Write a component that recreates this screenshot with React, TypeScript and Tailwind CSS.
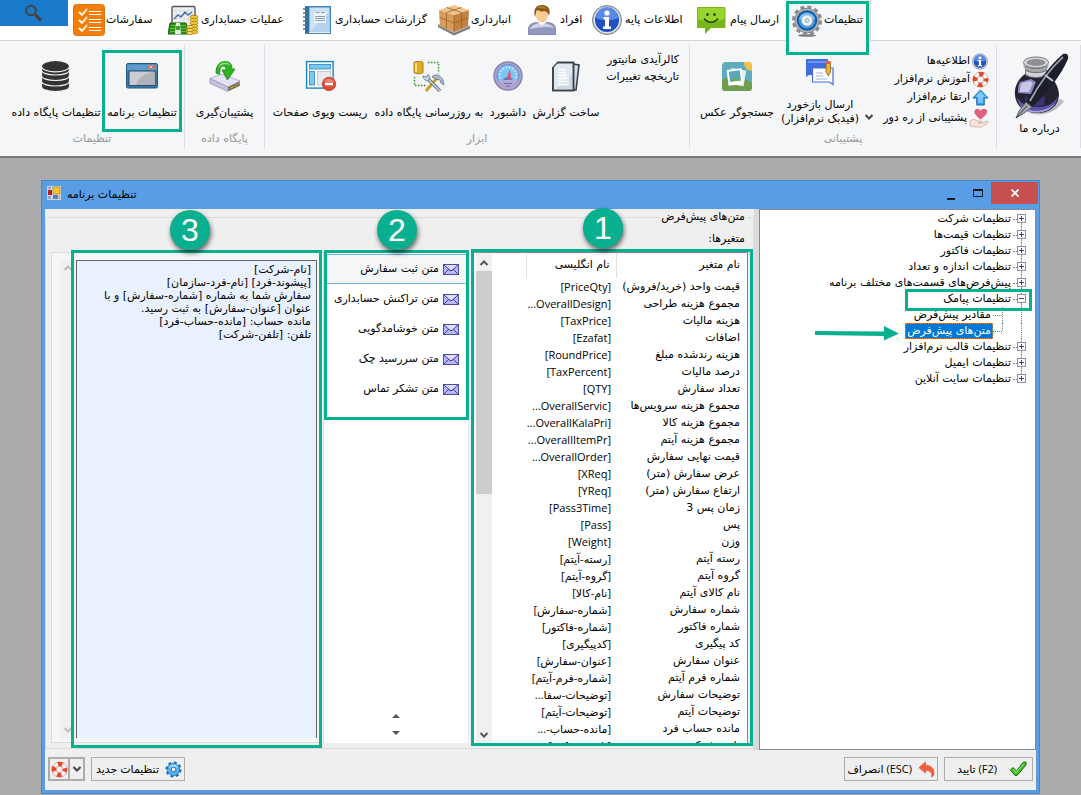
import React from 'react';
import clsx from 'clsx';

const variables: [string, string][] = [
  ['قیمت واحد (خرید/فروش)', '[PriceQty]'],
  ['مجموع هزینه طراحی', '[OverallDesign...'],
  ['هزینه مالیات', '[TaxPrice]'],
  ['اضافات', '[Ezafat]'],
  ['هزینه رندشده مبلغ', '[RoundPrice]'],
  ['درصد مالیات', '[TaxPercent]'],
  ['تعداد سفارش', '[QTY]'],
  ['مجموع هزینه سرویس‌ها', '[OverallServic...'],
  ['مجموع هزینه کالا', '[OverallKalaPri...'],
  ['مجموع هزینه آیتم', '[OverallItemPr...'],
  ['قیمت نهایی سفارش', '[OverallOrder...'],
  ['عرض سفارش (متر)', '[XReq]'],
  ['ارتفاع سفارش (متر)', '[YReq]'],
  ['زمان پس 3', '[Pass3Time]'],
  ['پس', '[Pass]'],
  ['وزن', '[Weight]'],
  ['رسته آیتم', '[رسته-آیتم]'],
  ['گروه آیتم', '[گروه-آیتم]'],
  ['نام کالای آیتم', '[نام-کالا]'],
  ['شماره سفارش', '[شماره-سفارش]'],
  ['شماره فاکتور', '[شماره-فاکتور]'],
  ['کد پیگیری', '[کدپیگیری]'],
  ['عنوان سفارش', '[عنوان-سفارش]'],
  ['شماره فرم آیتم', '[شماره-فرم-آیتم]'],
  ['توضیحات سفارش', '[توضیحات-سفا...'],
  ['توضیحات آیتم', '[توضیحات-آیتم]'],
  ['مانده حساب فرد', '[مانده-حساب-...'],
  ['تلفن شرکت', '[تلفن-شرکت]'],
];

const messages = [
  'متن ثبت سفارش',
  'متن تراکنش حسابداری',
  'متن خوشامدگویی',
  'متن سررسید چک',
  'متن تشکر تماس',
];

const template = `[نام-شرکت]
[پیشوند-فرد] [نام-فرد-سازمان]
سفارش شما به شماره [شماره-سفارش] و با
عنوان [عنوان-سفارش] به ثبت رسید.
مانده حساب: [مانده-حساب-فرد]
تلفن: [تلفن-شرکت]`;

interface TreeNode {
  label: string;
  open?: boolean;
  child?: boolean;
  selected?: boolean;
}

const tree: TreeNode[] = [
  { label: 'تنظیمات شرکت' },
  { label: 'تنظیمات قیمت‌ها' },
  { label: 'تنظیمات فاکتور' },
  { label: 'تنظیمات اندازه و تعداد' },
  { label: 'پیش‌فرض‌های قسمت‌های مختلف برنامه' },
  { label: 'تنظیمات پیامک', open: true },
  { label: 'مقادیر پیش‌فرض', child: true },
  { label: 'متن‌های پیش‌فرض', child: true, selected: true },
  { label: 'تنظیمات قالب نرم‌افزار' },
  { label: 'تنظیمات ایمیل' },
  { label: 'تنظیمات سایت آنلاین' },
];

/* ---------- icons ---------- */

const OrdersIcon = () => (
  <svg viewBox="0 0 32 32" className="size-8 shrink-0">
    <rect x="0.5" y="0.5" width="31" height="31" rx="3" fill="#f57f06" stroke="#d9730c" />
    <g fill="none" stroke="#fff" strokeWidth="1.8">
      <path d="M6 8l3 3 5-6M6 16l3 3 5-6M6 24l3 3 5-6" />
      <path d="M16 7.5h12M16 10.5h12M16 15.5h12M16 18.5h12M16 23.5h12M16 26.5h12" strokeWidth="1.1" />
    </g>
  </svg>
);

const OperationsIcon = () => (
  <svg viewBox="0 0 32 32" className="size-8 shrink-0">
    <rect x="4" y="2.500" width="23" height="22" rx="1.500" fill="#f2f2f2" stroke="#555" strokeWidth="1.400" />
    <path d="M8 3v20M12 3v20M16 3v20M20 3v20M24 3v20M5 7h21M5 11h21M5 15h21" stroke="#d3d7dc" strokeWidth=".7" />
    <path d="M6 15l4-4 3 2 4-5 3 3 4-3" fill="none" stroke="#4571ad" strokeWidth="1.500" />
    <path d="M2 19h16l2 11H0z" fill="#2f8f1c" stroke="#1b5f10" />
    <path d="M3 21.500h15M2 24.500h17M2 27.500h18" stroke="#5cba40" />
    <path d="M8 19h4l1 11H7z" fill="#e9f3e4" />
    <circle cx="10" cy="24" r="2.300" fill="#3d9b2a" />
    {[13, 16, 19, 22, 25, 28].map((y) => (
      <ellipse key={y} cx="26" cy={y} rx="4" ry="1.800" fill="#f1c93b" stroke="#a87b12" strokeWidth=".8" />
    ))}
    {[23, 26, 29].map((y) => (
      <ellipse key={y} cx="22" cy={y} rx="3.500" ry="1.600" fill="#f7d85a" stroke="#a87b12" strokeWidth=".8" />
    ))}
  </svg>
);

const ReportsIcon = () => (
  <svg viewBox="0 0 32 32" className="size-8 shrink-0">
    <rect x="3" y="2" width="26" height="28" fill="#4387b7" />
    <rect x="3" y="3" width="4" height="26" fill="#2f6f9f" />
    <rect x="7.500" y="3.500" width="20" height="24.500" fill="#cde2f4" />
    <path d="M7.500 28L27.500 8v20z" fill="#b5d3ec" />
    <path d="M12 8h12v11H12z" fill="#eef4fa" />
    <path d="M13.500 8.500h4m1.500 0h4M13 12.500h10M13 14.500h10M13 16.500h10" stroke="#7c97b8" strokeWidth=".9" />
    <path d="M1 5h5M1 9h5M1 13h5M1 17h5M1 21h5M1 25h5" stroke="#6a7684" strokeWidth="1.600" strokeDasharray="3 1" />
    <path d="M7 28.500h21" stroke="#e8eef4" />
  </svg>
);

const BoxIcon = () => (
  <svg viewBox="0 0 32 32" className="size-8 shrink-0">
    <path d="M0 23l16 8.500 16-7v-3L16 28 0 20z" fill="#7c7c7c" />
    <path d="M0 21l16 8 16-7-5-4-21-1z" fill="#c6c6c6" />
    <path d="M1 6l15 5v17L2 22z" fill="#d99b58" />
    <path d="M16 11l15-5-1 16-14 6z" fill="#c4803f" />
    <path d="M1 6l15-5 15 5-15 5z" fill="#f0c48c" />
    <path d="M8.500 3.500l15 5M23.500 3.500l-15 5v16M23.500 8.500v16M1.500 13.500L16 19l14.500-5.500M16 11v17" fill="none" stroke="#9a6233" strokeWidth=".8" />
  </svg>
);

const PersonIcon = () => (
  <svg viewBox="0 0 32 32" className="size-8 shrink-0">
    <path d="M1.500 30.500v-5c0-5 4-6.500 8-7h11c5 .5 8 2 8 7v5z" fill="#9298bf" stroke="#6e769f" strokeWidth=".8" />
    <path d="M3 25c2-5 8-6 12-6s10 2 12 5c-6-2-16-1-24 1z" fill="#cfd3ea" />
    <path d="M10 17.500l5 4 5-4v-3H10z" fill="#fff" />
    <ellipse cx="15" cy="11" rx="6" ry="7.500" fill="#fbcb97" />
    <path d="M8 13C6 5 9 1 15 1c7 0 9 5 7 11-1-3-2-4-4-5-3 1-6 0-8-1-1 2-1 4-2 7z" fill="#8a5a1c" />
    <path d="M10 4c3-3 8-2 10 1-3-1-6-1-10-1z" fill="#b57c30" />
  </svg>
);

const InfoIcon = ({ className }: { className: string }) => (
  <svg viewBox="0 0 32 32" className={className}>
    <circle cx="15" cy="16" r="14.500" fill="#a9adb6" stroke="#7f848e" />
    <circle cx="15" cy="16" r="13.500" fill="#dfe2ea" />
    <circle cx="15" cy="16" r="12" fill="#2152c4" />
    <path d="M4 14a11 11 0 0 1 22 0c-6 3-15 3-22 0z" fill="#5b8ae6" />
    <circle cx="15" cy="9" r="2.600" fill="#fff" />
    <path d="M11.500 13h5.500v9.500h2v2.500h-8v-2.500h2v-7h-1.500z" fill="#fff" />
  </svg>
);

const ChatIcon = () => (
  <svg viewBox="0 0 32 32" className="size-8 shrink-0">
    <path d="M1 3h26c1 0 1.500.5 1.500 1.500v18c0 1-.5 1.500-1.500 1.500H14l-6 6v-6H1c-.5 0-1-.5-1-1V4c0-.5.5-1 1-1z" fill="#79b51c" />
    <path d="M1 4h26.500v11C18 18 8 18 1 15z" fill="#9ad42f" />
    <ellipse cx="10.500" cy="10.500" rx="1.300" ry="1.600" fill="#234a07" />
    <ellipse cx="17.500" cy="10.500" rx="1.300" ry="1.600" fill="#234a07" />
    <path d="M7 14.500c4 5 10 5 14 0" fill="none" stroke="#234a07" strokeWidth="1.600" />
  </svg>
);

const GearIcon = () => (
  <svg viewBox="0 0 32 32" className="size-8 shrink-0">
    <ellipse cx="16" cy="30.500" rx="9" ry="1.300" fill="#77797c" />
    <circle cx="16" cy="15.500" r="13.300" fill="none" stroke="#8b8d90" strokeWidth="3.600" strokeDasharray="4 2.960" />
    <circle cx="16" cy="15.500" r="12.300" fill="#b4b6b9" stroke="#77797c" strokeWidth=".8" />
    <circle cx="16" cy="15.500" r="10.300" fill="#14599f" />
    <circle cx="16" cy="15.500" r="8.300" fill="#3f9be4" />
    <path d="M8 14a8.300 8.300 0 0 1 16 0z" fill="#7cc4f5" />
    <circle cx="16" cy="15.500" r="5.500" fill="#eef2f6" stroke="#aab3bd" strokeWidth=".7" />
    <circle cx="16" cy="15.500" r="2" fill="#d3d9e0" stroke="#8d959f" strokeWidth=".7" />
  </svg>
);

const DatabaseIcon = () => (
  <svg viewBox="0 0 32 32" className="size-8">
    <g fill="#333" stroke="#f5f6f8" strokeWidth="1.200">
      <path d="M1.500 21.500v5c0 3 6 5 14 5s14-2 14-5v-5z" />
      <path d="M1.500 16v5c0 3 6 5 14 5s14-2 14-5v-5z" />
      <path d="M1.500 10.500v5c0 3 6 5 14 5s14-2 14-5v-5z" />
      <path d="M1.500 6v4c0 3 6 5 14 5s14-2 14-5V6z" />
      <ellipse cx="15.500" cy="6.200" rx="14" ry="5.700" />
    </g>
  </svg>
);

const WindowIcon = () => (
  <svg viewBox="0 0 32 32" className="size-8">
    <rect x=".5" y="3.500" width="31" height="24.500" rx="1.500" fill="#3b7cae" stroke="#20567f" />
    <path d="M1 4.500h30v6H1z" fill="#5c9ccb" />
    <rect x="3" y="11" width="26" height="14.500" fill="#c9cbd0" stroke="#2d4a66" />
    <path d="M10 25c2-7 8-12 19-13v13z" fill="#b0b3b9" />
    <path d="M21 5h8v4h-8z" fill="#c4726f" />
    <path d="M23.500 5.500l3 3m0-3l-3 3" stroke="#f3dede" strokeWidth=".9" />
  </svg>
);

const BackupIcon = () => (
  <svg viewBox="0 0 32 32" className="size-8">
    <path d="M1 18.500L12 14l19 7-12 6z" fill="#e4e2f4" stroke="#a9a7c6" strokeWidth=".8" />
    <path d="M1 18.500l18 8.500v4.500L1 23.500z" fill="#c3c1dd" stroke="#8886a8" strokeWidth=".6" />
    <path d="M19 27l12-6v5l-12 5.500z" fill="#8b8996" />
    <path d="M20 28.700l6-2.700M27.500 25.300l2-1" stroke="#5a4a10" strokeWidth="2.600" />
    <path d="M20.500 28.500l5-2.300M27.700 25.200l1.500-.7" stroke="#e6c53a" strokeWidth="1.200" />
    <path d="M7 13C7 5 11 1.500 16 1.500c5.500 0 7 3.500 7 7.500h3l-7.500 11L13 10h4c0-3-1-4-3-4-3 0-3 4-3.500 8.500z" fill="#2fb421" stroke="#1c8614" strokeWidth=".8" />
    <path d="M9 8c1-4 4-5.500 7.500-5.500 2 0 4 1 5 3-4-2-9-2-12.500 2.500z" fill="#8ae37a" />
  </svg>
);

const ResetViewIcon = () => (
  <svg viewBox="0 0 32 32" className="size-8">
    <rect x="2.600" y="1.600" width="26.500" height="26.500" fill="#fff" stroke="#1a86b8" strokeWidth="1.400" />
    <rect x="5.500" y="4.500" width="21" height="4.500" fill="#7fc7ef" stroke="#2b87bd" strokeWidth=".8" />
    <rect x="5.500" y="11.500" width="5" height="13.500" fill="#7fc7ef" stroke="#2b87bd" strokeWidth=".8" />
    <rect x="13.500" y="11.500" width="13" height="13.500" fill="#e8eaed" stroke="#b9bec6" strokeWidth=".8" />
    <circle cx="25" cy="24" r="6.700" fill="#e14a36" stroke="#b23322" strokeWidth=".7" />
    <path d="M20 22a5.500 5.500 0 0 1 10 0z" fill="#f08775" />
    <rect x="21" y="22.700" width="8" height="2.600" fill="#fff" />
  </svg>
);

const UpdateDbIcon = () => (
  <svg viewBox="0 0 32 32" className="size-8">
    <path d="M1 2.500c0-1.500 9-1.500 9 0v10c0 1.500-9 1.500-9 0z" fill="#e3ad1d" stroke="#8a6a14" strokeWidth=".8" />
    <path d="M3 3v9" stroke="#fbe58f" strokeWidth="1.800" />
    <path d="M15 2.500h10.500v11M1.500 17v8.500h11" fill="none" stroke="#2e8a2b" strokeWidth="1.400" strokeDasharray="1.500 1.500" />
    <path d="M13 31l11-13" stroke="#d29a25" strokeWidth="3" />
    <path d="M19 17c4-4 8-2 11 3l1 5-3-2-1-3-4-1z" fill="#aebdd0" stroke="#55657a" strokeWidth=".7" />
    <path d="M14 18l13 13" stroke="#56687f" strokeWidth="3.200" />
    <path d="M14 18l13 13" stroke="#c5d3e3" strokeWidth="1.700" />
    <path d="M10 16l4 1 1-2.500c2 1 2.500 4 1 5.500s-5 1-6-4z" fill="#c5d3e3" stroke="#56687f" strokeWidth=".7" />
  </svg>
);

const DashboardIcon = () => (
  <svg viewBox="0 0 32 32" className="size-8">
    <circle cx="16" cy="16" r="14" fill="#a9a5cf" stroke="#8d7db4" strokeWidth="1.400" />
    <circle cx="16" cy="15.500" r="11" fill="#7cc5f5" stroke="#7e83c0" />
    <path d="M6 20.500h20c-4 8-16 8-20 0z" fill="#b4a9d4" />
    <path d="M8 18a8.300 8.300 0 1 1 16 0" fill="none" stroke="#eaf7ff" strokeWidth="1.600" strokeDasharray="1.200 2" />
    <path d="M11 20c1-4 9-4 10 0z" fill="#7a70b4" />
    <path d="M18 9l1 9.500-4.500.5z" fill="#e0536f" />
    <path d="M12 23.500h8M14 26h4" stroke="#8f5f97" strokeWidth="1.200" />
  </svg>
);

const BuildReportIcon = () => (
  <svg viewBox="0 0 32 32" className="size-8">
    <path d="M23 4l6 1-3 25h-4z" fill="#d3dde6" stroke="#394049" strokeWidth="1.600" />
    <rect x="3" y="2.500" width="20.500" height="28" fill="#dfe9f2" stroke="#394049" strokeWidth="1.900" />
    <path d="M6 29L22 14v15z" fill="#ccd9e5" />
    <path d="M2 1h5v6H2z" fill="#f5f6f8" />
    <path d="M3 3h1.500M3.500 5.500h1M8 9.500h8M8 12.500h8M8 15.500h9M8 18.500h11M8 21.500h11M8 24.500h11" stroke="#fff" strokeWidth="1.400" />
    <path d="M3.500 7l4-4.500" stroke="#394049" strokeWidth="1.200" />
  </svg>
);

const PhotoIcon = () => (
  <svg viewBox="0 0 32 32" className="size-8">
    <rect x="1" y="2" width="30" height="29" rx="4" fill="#61abbf" />
    <path d="M1 20l9-5 10 7 4-3 7 4v4c0 3-1 4-4 4H5c-3 0-4-1-4-4z" fill="#6f9e4c" />
    <path d="M23 2h4c3 0 4 2 4 4v5a8 8 0 0 1-8-9z" fill="#f7c244" />
    <rect x="9" y="9" width="15" height="16" transform="rotate(10 16 17)" fill="#dceff4" />
    <rect x="6.500" y="9" width="15" height="16" transform="rotate(-7 14 17)" fill="#fff" />
    <rect x="8.500" y="11" width="11" height="10" transform="rotate(-7 14 17)" fill="#58a8bd" />
    <path d="M9.500 21.500l3-4 3 2 2-1.500 3 2.500z" fill="#74a94b" />
  </svg>
);

const FeedbackIcon = () => (
  <svg viewBox="0 0 32 32" className="size-8">
    <path d="M2 3h22v16H5l-3 2z" fill="#3f6fe0" />
    <path d="M4 5h18v2H4z" fill="#6f94ee" />
    <path d="M8.500 12h20.500v16.500L25.500 26h-17z" fill="#fff" stroke="#476fd6" strokeWidth="1.200" />
    <path d="M12 17h7M12 20h7M12 23h11" stroke="#9eb2e4" strokeWidth="1.200" />
    <path d="M22 7h4.500v9l-2.200 4-2.300-4z" fill="#f6b02d" stroke="#7b6424" strokeWidth=".8" />
    <path d="M22 5h4.500v3H22z" fill="#e05d52" />
  </svg>
);

const LifebuoyIcon = () => (
  <svg viewBox="0 0 18 18" className="size-[17px] shrink-0">
    <circle cx="9" cy="9" r="5.800" fill="none" stroke="#d98270" strokeWidth="5" />
    <circle cx="9" cy="9" r="5.800" fill="none" stroke="#fff" strokeWidth="3.800" />
    <circle cx="9" cy="9" r="5.900" fill="none" stroke="#e5492c" strokeWidth="4.800" strokeDasharray="4.800 4.468" strokeDashoffset="2.400" />
  </svg>
);

const UpArrowIcon = () => (
  <svg viewBox="0 0 18 18" className="size-[17px] shrink-0">
    <path d="M9 1l8 8.500h-4V17H5V9.500H1z" fill="#35a3ee" stroke="#1567b5" />
    <path d="M9 2.500l5.500 6h-3v6H6.500v-6h-3z" fill="#7cc8f8" />
  </svg>
);

const HeartHandIcon = () => (
  <svg viewBox="0 0 20 20" className="size-5 shrink-0">
    <path d="M11.500 11.500C6 7 5 5 5.500 3c1-3 5-3 6 0 1-3 6-3 6.500 0 .5 2-1 4.500-6.500 8.500z" fill="#e0617f" />
    <path d="M1 13c3-2 5-2 7 0h4c1.500 0 1.500 2 0 2H9h4l5-2c1.500 0 1.500 1.500.5 2l-6 4H7l-6-1z" fill="#f9e3db" stroke="#c9a09a" strokeWidth=".7" />
  </svg>
);

const InkPenIcon = () => (
  <svg viewBox="0 0 56 68" className="h-[68px] w-14">
    <path d="M14 60c12 3 26 2 36-12l-4-2-10 8z" fill="#b9b9bf" />
    <path d="M12 20C4 26 0 34 1 42c1 12 10 18 22 18s21-6 22-18c0-8-5-16-12-22z" fill="#25232f" />
    <path d="M3 44c4 7 11 10 20 10s17-3 20-10c0 9-8 15-20 15S4 54 3 44z" fill="#5b50a8" />
    <path d="M6 52c9 8 26 8 35-2-5 11-27 14-35 2z" fill="#a9a4d8" />
    <path d="M6 29l11-3 5 3-5 12-13-1c0-5 0-8 2-11z" fill="#8d86c4" />
    <path d="M8 30l8-2 3 2-4 9H6c0-4 0-6 2-9z" fill="#c9c5e6" />
    <path d="M11 44c6 2 14 2 20-1l-1 9c-6 2-13 2-18-1z" fill="#3a3472" />
    <path d="M11 10h22v12c-4 4-18 4-22 0z" fill="#77777d" />
    <path d="M12 18c5 3 15 3 20 0v3c-5 4-15 4-20 0z" fill="#d4d4d9" />
    <ellipse cx="22" cy="9.500" rx="12.500" ry="5.500" fill="#d8d8dc" stroke="#77777f" />
    <ellipse cx="22" cy="9.500" rx="9.500" ry="3.500" fill="#8f8f96" />
    <path d="M9.500 10c1 8 24 8 25 0v3c-1 8-24 8-25 0z" fill="#a6a6ac" />
    <path d="M49 1c4-1 6 1 5 5C47 22 34 39 18 54l-6-5C22 32 34 14 49 1z" fill="#1d1f2b" />
    <path d="M49 4C36 16 25 31 16 48" fill="none" stroke="#a5aac4" strokeWidth="1.700" />
    <path d="M31 22l8 6" stroke="#c7cad3" strokeWidth="1.800" />
    <path d="M12 49l6 5-9 7-7 4 3-7z" fill="#9fa2ab" stroke="#4e515b" strokeWidth=".8" />
    <path d="M13 53L2 65" stroke="#3c3e47" />
  </svg>
);

const EnvelopeIcon = () => (
  <svg viewBox="0 0 16 11" className="h-[11px] w-4 shrink-0">
    <rect x=".5" y=".5" width="15" height="10" fill="#b9b9f7" stroke="#4b4ba8" />
    <path d="M1 1l6 5.500h2L15 1M1 10l5-5M15 10l-5-5" fill="none" stroke="#3c3c90" />
    <path d="M2 1h12L9 5.500H7z" fill="#dedeff" />
  </svg>
);

const Chevron = ({ up, className }: { up?: boolean; className: string }) => (
  <svg viewBox="0 0 10 8" className={clsx('h-2 w-2.5', className)} fill="none" stroke="currentColor" strokeWidth="2">
    <path d={up ? 'M1.500 6L5 2.500 8.500 6' : 'M1.500 2L5 5.500 8.500 2'} />
  </svg>
);

const BlueGearIcon = () => (
  <svg viewBox="0 0 18 18" className="size-[17px] shrink-0">
    <circle cx="9" cy="9" r="7" fill="none" stroke="#1c6fb8" strokeWidth="3" strokeDasharray="3 2.500" />
    <circle cx="9" cy="9" r="6.500" fill="#55b2ee" stroke="#1c6fb8" strokeWidth=".8" />
    <path d="M4 7a5.500 5.500 0 0 1 10 0z" fill="#a5dcfb" />
    <circle cx="9" cy="9" r="2.500" fill="#f0f0f0" stroke="#1c6fb8" />
  </svg>
);

const UndoIcon = () => (
  <svg viewBox="0 0 18 18" className="size-[17px] shrink-0">
    <path d="M1 7l7-6v3.500c6 0 9 4 9 8 0 2-1 4-3 4.500 1.500-4-.5-7-6-7V13z" fill="#f4603b" stroke="#d2492a" strokeWidth=".6" />
  </svg>
);

const CheckIcon = () => (
  <svg viewBox="0 0 18 16" className="h-4 w-[18px] shrink-0">
    <path d="M1.500 9L4 6.500 7.500 10 14 1.500l3-.5v3L8 14.500H6z" fill="#3fc41d" stroke="#14650a" />
    <path d="M4 8l3 3.500L15 2.500" fill="none" stroke="#a3f07e" />
  </svg>
);

/* ---------- building blocks ---------- */

const Badge = ({ n, className }: { n: number; className: string }) => (
  <span
    className={clsx(
      "absolute z-20 flex size-10 items-center justify-center rounded-full bg-[#09b090] font-['Liberation_Sans',sans-serif] text-[32px] leading-none text-white shadow-[1px_3px_5px_rgba(0,0,0,0.6)]",
      className,
    )}
  >
    {n}
  </span>
);

const Outline = ({ className }: { className: string }) => (
  <span className={clsx('pointer-events-none absolute z-10 border-3 border-[#09b090]', className)} />
);

interface TabProps {
  label: string;
  icon: React.ReactNode;
  className: string;
  active?: boolean;
}

const Tab: React.FC<TabProps> = ({ label, icon, className, active }) => (
  <button
    type="button"
    role="tab"
    aria-selected={!!active}
    className={clsx(
      'relative flex shrink-0 items-center gap-px whitespace-nowrap',
      active && '-mb-px border-x border-[#d5d5d5] bg-[#f5f6f8]',
      className,
    )}
  >
    {icon}
    <span dir="rtl">{label}</span>
    {active && <Outline className="top-px right-px -bottom-3.5 -left-0.5" />}
  </button>
);

const RibbonGroup = ({
  caption,
  className,
  children,
}: {
  caption?: string;
  className: string;
  children: React.ReactNode;
}) => (
  <section className={clsx('flex h-[103px] shrink-0 flex-col border-r border-[#dcdde0]', className)}>
    <div className="flex">{children}</div>
    {caption && (
      <h2 dir="rtl" className="mt-auto mb-px text-center leading-4 text-[#999]">
        {caption}
      </h2>
    )}
  </section>
);

const RibbonButton = ({
  icon,
  label,
  className,
  outlined,
}: {
  icon: React.ReactNode;
  label: string;
  className: string;
  outlined?: boolean;
}) => (
  <button
    type="button"
    className={clsx('relative flex shrink-0 flex-col items-center gap-[13px] pt-[15px] whitespace-nowrap', className)}
  >
    {icon}
    <span dir="rtl" className="leading-4">
      {label}
    </span>
    {outlined && <Outline className="-inset-x-1 top-[5px] -bottom-[11px]" />}
  </button>
);

const TreeRow = ({ node, first, last }: { node: TreeNode; first: boolean; last: boolean }) => (
  <li className="relative flex h-4 items-center">
    <span className="flex h-4 w-[9px] shrink-0 flex-col items-center">
      {node.child ? (
        <span className="h-4 border-l border-dotted border-[#808080]" />
      ) : (
        <>
          <span className={clsx('h-[3px] border-l border-dotted', first ? 'border-transparent' : 'border-[#808080]')} />
          <span className="relative size-[9px] border border-[#919191] bg-white">
            <span className="absolute inset-x-px top-[3px] h-px bg-[#26469b]" />
            {!node.open && <span className="absolute inset-y-px left-[3px] w-px bg-[#26469b]" />}
          </span>
          <span className={clsx('h-1 border-l border-dotted', last ? 'border-transparent' : 'border-[#808080]')} />
        </>
      )}
    </span>
    {node.child ? (
      <span
        className={clsx(
          'mr-3.5 flex w-2.5 items-center border-r border-dotted border-[#808080]',
          node.selected ? 'mb-2 h-2' : 'h-4',
        )}
      >
        <span className={clsx('w-full border-t border-dotted border-[#808080]', node.selected && 'mt-2')} />
      </span>
    ) : (
      <span className="w-1 border-t border-dotted border-[#808080]" />
    )}
    <button
      type="button"
      className={clsx(
        'relative h-4 px-0.5 leading-4 whitespace-nowrap',
        node.selected && 'bg-[#0078d7] text-white outline-1 -outline-offset-1 outline-dotted outline-[#ff8728]',
      )}
    >
      {node.label}
      {node.selected && (
        <svg viewBox="0 0 84 16" className="absolute top-0.5 right-full mr-1.5 h-4 w-[84px]" fill="#09b090">
          <path d="M0 6l69 .5V1l15 7.500-15 7V11L0 10z" />
        </svg>
      )}
    </button>
    {node.open && <Outline className="-top-0.5 -right-1.5 -bottom-1 w-[127px]" />}
  </li>
);

const footerButton =
  "flex h-6 shrink-0 items-center justify-end bg-[#efefef] font-['Open_Sans','DejaVu_Sans',sans-serif] outline-1 -outline-offset-1 outline-[#adadad]";

export default function App() {
  return (
    <div className="flex h-screen min-h-[640px] flex-col overflow-hidden bg-[#ababab] font-['DejaVu_Sans',sans-serif] text-[11px] text-black">
      <nav role="tablist" className="flex h-[41px] shrink-0 border-b border-[#d5d5d5] bg-white">
        <button
          type="button"
          aria-label="جستجو"
          className="mr-[5px] flex h-[26px] w-[68px] shrink-0 items-center justify-center bg-[#1979ca]"
        >
          <svg viewBox="0 0 18 18" className="-mt-px size-[18px]" fill="none" stroke="#444">
            <circle cx="6" cy="6.500" r="4.800" strokeWidth="2" />
            <path d="M10 10.500l6 6" strokeWidth="3.200" />
          </svg>
        </button>
        <Tab label="سفارشات" icon={<OrdersIcon />} className="w-[95px]" />
        <Tab label="عملیات حسابداری" icon={<OperationsIcon />} className="w-[134px]" />
        <Tab label="گزارشات حسابداری" icon={<ReportsIcon />} className="w-[136px]" />
        <Tab label="انبارداری" icon={<BoxIcon />} className="w-[89px]" />
        <Tab label="افراد" icon={<PersonIcon />} className="w-[65px]" />
        <Tab label="اطلاعات پایه" icon={<InfoIcon className="size-8 shrink-0" />} className="w-[105px]" />
        <Tab label="ارسال پیام" icon={<ChatIcon />} className="w-[90px]" />
        <Tab label="تنظیمات" icon={<GearIcon />} active className="w-[84px] pl-[3px]" />
      </nav>

      <div className="flex shrink-0 border-b-2 border-[#77797c] bg-[#f5f6f8] pt-1 pb-2">
        <RibbonGroup caption="تنظیمات" className="w-[185px]">
          <RibbonButton icon={<DatabaseIcon />} label="تنظیمات پایگاه داده" className="ml-1.5 w-[100px]" />
          <RibbonButton icon={<WindowIcon />} label="تنظیمات برنامه" outlined className="w-[72px]" />
        </RibbonGroup>
        <RibbonGroup caption="پایگاه داده" className="w-20">
          <RibbonButton icon={<BackupIcon />} label="پشتیبان‌گیری" className="w-full" />
        </RibbonGroup>
        <RibbonGroup caption="ابزار" className="w-[425px]">
          <RibbonButton icon={<ResetViewIcon />} label="ریست ویوی صفحات" className="ml-2 w-[94px]" />
          <RibbonButton icon={<UpdateDbIcon />} label="به روزرسانی پایگاه داده" className="w-[124px]" />
          <RibbonButton icon={<DashboardIcon />} label="داشبورد" className="w-[34px]" />
          <RibbonButton icon={<BuildReportIcon />} label="ساخت گزارش" className="w-[82px]" />
          <div dir="rtl" className="flex w-[72px] flex-col items-start pt-[7px] whitespace-nowrap">
            <button type="button" className="h-[17px]">کالرآیدی مانیتور</button>
            <button type="button" className="h-[17px]">تاریخچه تغییرات</button>
          </div>
        </RibbonGroup>
        <RibbonGroup caption="پشتیبانی" className="w-[307px]">
          <RibbonButton icon={<PhotoIcon />} label="جستجوگر عکس" className="w-[94px]" />
          <button type="button" className="flex w-[72px] shrink-0 flex-col items-center gap-2.5 pt-[11px] whitespace-nowrap">
            <FeedbackIcon />
            <span dir="rtl" className="leading-[14px]">
              ارسال بازخورد
              <br />
              (فیدبک نرم‌افزار)
            </span>
          </button>
          <Chevron className="mt-[68px] ml-2 shrink-0 text-[#444]" />
          <div dir="rtl" className="flex w-[115px] flex-col items-start pt-[7px] whitespace-nowrap">
            <button type="button" className="flex h-[18px] items-center gap-0.5">
              <InfoIcon className="size-[17px] shrink-0" />
              اطلاعیه‌ها
            </button>
            <button type="button" className="flex h-[18px] items-center gap-0.5">
              <LifebuoyIcon />
              آموزش نرم‌افزار
            </button>
            <button type="button" className="flex h-[18px] items-center gap-0.5">
              <UpArrowIcon />
              ارتقا نرم‌افزار
            </button>
            <button type="button" className="mt-[3px] flex h-[18px] items-center gap-0.5">
              <HeartHandIcon />
              پشتیبانی از ره دور
            </button>
          </div>
        </RibbonGroup>
        <RibbonGroup className="w-[84px]">
          <button type="button" className="flex w-full flex-col items-center pt-2 pl-1.5">
            <InkPenIcon />
            <span dir="rtl" className="pr-1 leading-4">درباره ما</span>
          </button>
        </RibbonGroup>
      </div>

      <main className="mx-[41px] mt-[22px] mb-px flex min-h-0 flex-1 flex-col border border-[#4a86c5] bg-[#589de6] px-[3px] pb-[3px]">
        <header className="flex h-7 shrink-0 items-center">
          <svg viewBox="0 0 14 14" className="mb-1 ml-0.5 size-3.5">
            <rect width="14" height="14" fill="#d6d3ce" />
            <rect x="1" y="4" width="4" height="5" fill="#b81f1f" />
            <rect x="6" y="1" width="7" height="7" fill="#f3c52f" stroke="#a77c10" strokeWidth=".6" />
            <rect x="6" y="9" width="5" height="4" fill="#4c7fd8" />
            <path d="M1 10h3v3H1zM1 1h3v2H1zM12 10h1v3h-1z" fill="#8da5cf" />
          </svg>
          <h1 dir="rtl" className="ml-1.5">تنظیمات برنامه</h1>
          <div className="ml-auto flex items-start self-stretch pt-px">
            <button type="button" aria-label="کوچک کردن" className="flex h-[22px] w-7 items-end justify-center pb-1">
              <span className="h-0.5 w-2 bg-[#1b1b1b]" />
            </button>
            <button type="button" aria-label="بزرگ کردن" className="flex h-[22px] w-[26px] items-center justify-center">
              <span className="h-2 w-2.5 border border-t-2 border-[#1b1b1b]" />
            </button>
            <button
              type="button"
              aria-label="بستن"
              className="-mr-0.5 flex h-[22px] w-[47px] items-center justify-center bg-[#c75050]"
            >
              <svg viewBox="0 0 8 8" className="size-2" stroke="#fff" strokeWidth="1.800">
                <path d="M.5.5l7 7M7.500.5l-7 7" />
              </svg>
            </button>
          </div>
        </header>

        <div className="flex min-h-0 flex-1 flex-col bg-[#efefef]">
          <div className="flex min-h-0 flex-1">
            <fieldset dir="rtl" className="mb-px flex min-h-0 min-w-0 flex-1 flex-col border border-[#dcdcdc] pb-0.5">
              <legend className="mr-1.5 px-0.5 leading-4">متن‌های پیش‌فرض</legend>
              <h3 className="mt-1 h-5 shrink-0 pr-2 leading-5">متغیرها:</h3>
              <div dir="ltr" className="flex min-h-0 flex-1 pl-[5px]">
                <div className="relative mt-[3px] mb-[3px] flex min-w-0 flex-1 border border-[#dcdcdc] bg-[#f5f6f8] pt-[7px] pr-1.5 pb-1 pl-2">
                  <div className="flex w-4 shrink-0 flex-col items-center justify-between bg-[#f0f0f0] py-1">
                    <Chevron up className="text-[#bfbfbf]" />
                    <Chevron className="text-[#bfbfbf]" />
                  </div>
                  <textarea
                    dir="rtl"
                    aria-label="متن پیام"
                    defaultValue={template}
                    className="min-w-0 flex-1 resize-none overflow-hidden border border-b-0 border-[#646464] bg-[#e9f0fe] px-[5px] py-0.5 leading-[13px] outline-none"
                  />
                  <Outline className="-top-[3px] right-px -bottom-1.5 left-[19px]" />
                  <Badge n={3} className="-top-[43px] left-[118px]" />
                </div>

                <div className="relative mt-[3px] mb-[3px] flex w-36 shrink-0 flex-col bg-white pt-0.5">
                  {messages.map((message, i) => (
                    <button
                      key={message}
                      type="button"
                      dir="rtl"
                      className={clsx(
                        'flex h-[30px] items-center gap-1 border-y pr-[9px] whitespace-nowrap',
                        i === 0 ? 'border-[#7ab0e8] bg-[#f5f6f8]' : 'border-transparent',
                      )}
                    >
                      <EnvelopeIcon />
                      {message}
                    </button>
                  ))}
                  <div className="mt-auto mb-2 flex flex-col items-center gap-[13px]">
                    <button type="button" aria-label="بالا" className="border-x-4 border-b-4 border-x-transparent border-b-[#555]" />
                    <button type="button" aria-label="پایین" className="border-x-4 border-t-4 border-x-transparent border-t-[#555]" />
                  </div>
                  <Outline className="-top-0.5 -right-px left-0 h-[170px]" />
                  <Badge n={2} className="-top-[42px] left-[53px]" />
                </div>

                <div className="relative ml-[3px] flex w-[282px] shrink-0 border-3 border-[#09b090] pr-0.5">
                  <div className="flex min-w-0 flex-1 border-t border-r border-[#828790] bg-white">
                    <div className="ml-0.5 flex w-4 shrink-0 flex-col items-center bg-[#f0f0f0] pt-1.5 pb-1">
                      <Chevron up className="shrink-0 text-[#555]" />
                      <div className="mt-1 h-[223px] w-full bg-[#cdcdcd]" />
                      <Chevron className="mt-auto shrink-0 text-[#555]" />
                    </div>
                    <div className="min-w-0 flex-1 overflow-hidden">
                      <table dir="rtl" className="w-full table-fixed whitespace-nowrap">
                        <thead>
                          <tr className="h-[25px]">
                            <th className="w-[131px] border-l border-[#e2e2e2] pr-[7px] text-right font-normal">نام متغیر</th>
                            <th className="w-[90px] border-l border-[#e2e2e2] pr-1.5 text-right font-normal">نام انگلیسی</th>
                            <td />
                          </tr>
                        </thead>
                        <tbody className="leading-[17px]">
                          {variables.map(([name, code]) => (
                            <tr key={name} className="h-[17px]">
                              <td className="pr-[7px]">{name}</td>
                              <td className="pr-[5px] font-['Open_Sans','DejaVu_Sans',sans-serif]">{code}</td>
                              <td />
                            </tr>
                          ))}
                        </tbody>
                      </table>
                    </div>
                  </div>
                  <Badge n={1} className="-top-11 left-[109px]" />
                </div>
              </div>
            </fieldset>
            <div className="w-[5px] shrink-0 bg-[#d9d9d9]" />
            <ul dir="rtl" className="w-[277px] shrink-0 border border-[#828790] bg-white pt-px pr-[9px]">
              {tree.map((node, i) => (
                <TreeRow key={node.label} node={node} first={i === 0} last={i === tree.length - 1} />
              ))}
            </ul>
          </div>

          <footer className="flex shrink-0 items-center px-[3px] pt-[7px] pb-[9px] whitespace-nowrap">
            <div className="mr-1.5 flex h-6 border-2 border-[#adadad]">
              <button type="button" aria-label="راهنما" className="flex w-[18px] items-center justify-center">
                <LifebuoyIcon />
              </button>
              <button type="button" aria-label="گزینه‌ها" className="flex w-[15px] items-center justify-center border-l-2 border-[#adadad]">
                <Chevron className="text-[#444]" />
              </button>
            </div>
            <button type="button" className={clsx(footerButton, 'w-[94px] gap-1.5 pr-[3px]')}>
              <span dir="rtl">تنظیمات جدید</span>
              <BlueGearIcon />
            </button>
            <button type="button" className={clsx(footerButton, 'mr-1.5 ml-auto w-[94px] gap-1.5 pr-[3px]')}>
              <span dir="rtl">(ESC) انصراف</span>
              <UndoIcon />
            </button>
            <button type="button" className={clsx(footerButton, 'w-[89px] gap-3 pr-1.5')}>
              <span dir="rtl">(F2) تایید</span>
              <CheckIcon />
            </button>
          </footer>
        </div>
      </main>
    </div>
  );
}
